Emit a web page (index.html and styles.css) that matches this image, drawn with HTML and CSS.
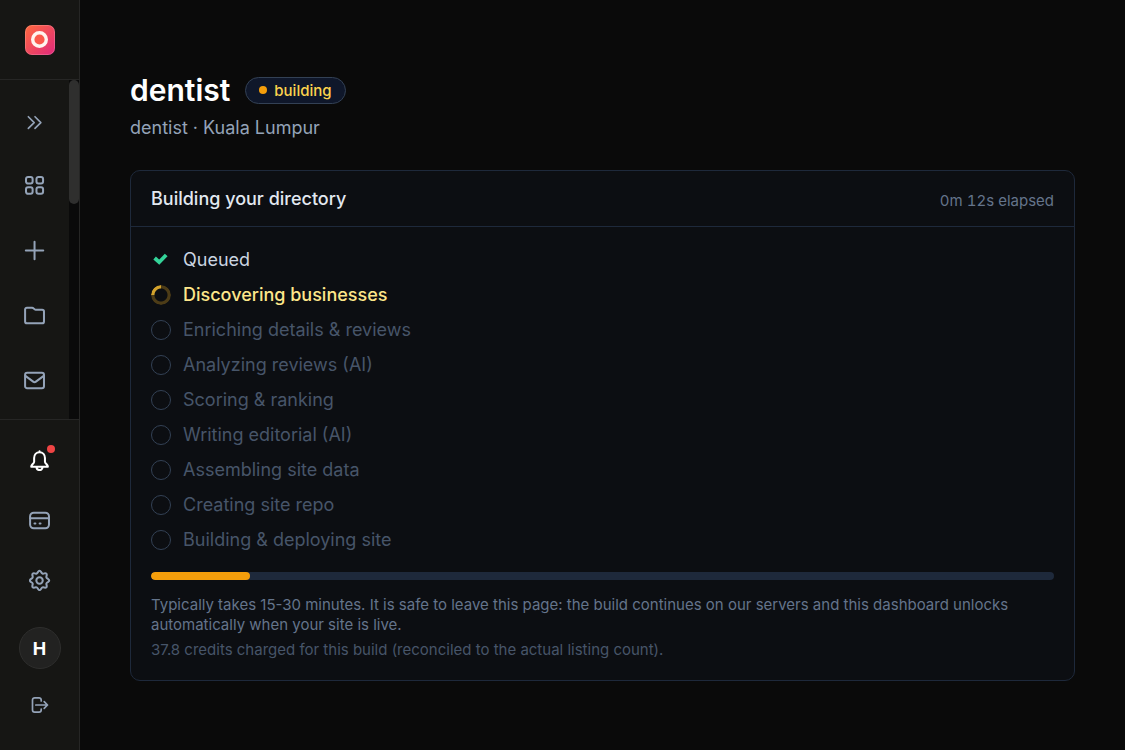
FILE: index.html
```html
<!DOCTYPE html>
<html lang="en">
  <head>
    <meta charset="UTF-8" />
    <meta name="viewport" content="width=device-width, initial-scale=1" />
    <title>dentist · Kuala Lumpur</title>
    <link rel="stylesheet" href="styles.css">
  </head>

  <body>
    <aside class="sidebar">
      <div class="sidebar-top">
        <a class="logo" href="#" aria-label="Home">
          <svg width="30" height="30" viewBox="0 0 30 30">
            <defs>
              <linearGradient id="logo-bg" x1="0" y1="0" x2="1" y2="1">
                <stop offset="0" stop-color="#ff6a3d" />
                <stop offset="1" stop-color="#e0287d" />
              </linearGradient>
            </defs>
            <rect width="30" height="30" rx="7" fill="url(#logo-bg)" />
            <rect x="0.5" y="0.5" width="29" height="29" rx="6.5" fill="none" stroke="#fff" stroke-opacity="0.18" />
            <circle cx="14.5" cy="14.5" r="6.8" fill="#fb5a4b" stroke="#fff4ee" stroke-width="3.4" />
          </svg>
        </a>
      </div>

      <div class="nav-scroll">
        <nav class="nav">
          <button class="nav-item nav-toggle" type="button" aria-label="Expand sidebar">
            <svg class="icon" viewBox="0 0 24 24"><path d="M4 4.5l7 7-7 7M12 4.5l7 7-7 7" /></svg>
          </button>
          <a class="nav-item" href="#" aria-label="Dashboard">
            <svg class="icon" viewBox="0 0 24 24">
              <rect x="2.2" y="3.2" width="7.2" height="7.2" rx="2.2" />
              <rect x="13.6" y="3.2" width="7.2" height="7.2" rx="2.2" />
              <rect x="2.2" y="14.4" width="7.2" height="7.2" rx="2.2" />
              <rect x="13.6" y="14.4" width="7.2" height="7.2" rx="2.2" />
            </svg>
          </a>
          <a class="nav-item" href="#" aria-label="New directory">
            <svg class="icon" viewBox="0 0 24 24"><path d="M11.5 3v19M2 12.5h19" /></svg>
          </a>
          <a class="nav-item" href="#" aria-label="Directories">
            <svg class="icon" viewBox="0 0 24 24"><path d="M1.2 6a2 2 0 0 1 2-2h5.6c1.8 0 2 2.2 3.8 2.2h7.2a2 2 0 0 1 2 2V19a2 2 0 0 1-2 2H3.2a2 2 0 0 1-2-2z" /></svg>
          </a>
          <a class="nav-item" href="#" aria-label="Messages">
            <svg class="icon" viewBox="0 0 24 24"><rect x="1.2" y="4" width="20.6" height="17" rx="2.2" /><path d="M1.5 7.5l8.5 6.3a2.5 2.5 0 0 0 3 0l8.5-6.3" /></svg>
          </a>
        </nav>
        <div class="scroll-track"><div class="scroll-thumb"></div></div>
      </div>

      <div class="sidebar-bottom">
        <button class="tool bell" type="button" aria-label="Notifications">
          <svg class="icon" viewBox="0 0 24 24"><path d="M11.5 2.5v1M11.5 3.5c-3.6 0-5.9 2.7-5.9 6.2v4.1c0 2-3.2 3.3-3.2 5.5h18.2c0-2.2-3.2-3.5-3.2-5.5V9.7c0-3.500-2.300-6.200-5.900-6.200zM8.200 19.700a3.300 3.300 0 0 0 6.600 0" /></svg>
          <span class="bell-dot"></span>
        </button>
        <a class="tool" href="#" aria-label="Billing">
          <svg class="icon" viewBox="0 0 24 24"><rect x="1.2" y="4" width="20.6" height="17" rx="4" /><path d="M1.2 10h20.6M6 15.8h1M11.6 15.8h1" /></svg>
        </a>
        <a class="tool" href="#" aria-label="Settings">
          <svg class="icon" viewBox="-11.500 -12.500 24 24">
            <circle r="3.5" />
            <path d="M9.12-1.81Q12 0 9.12 1.81Q6.740 2.790 7.730 5.170Q8.490 8.490 5.170 7.730Q2.790 6.740 1.810 9.120Q0 12-1.810 9.120Q-2.790 6.740-5.170 7.730Q-8.490 8.490-7.730 5.170Q-6.740 2.790-9.120 1.810Q-12 0-9.120-1.810Q-6.740-2.790-7.730-5.170Q-8.490-8.490-5.170-7.730Q-2.790-6.740-1.810-9.120Q0-12 1.810-9.120Q2.790-6.740 5.170-7.730Q8.490-8.490 7.730-5.170Q6.740-2.790 9.120-1.810z" />
          </svg>
        </a>
        <button class="avatar" type="button" aria-label="Account">H</button>
        <button class="logout" type="button" aria-label="Log out">
          <svg class="icon" viewBox="0 0 18 18"><path d="M10.2 5V4a2.2 2.2 0 0 0-2.2-2.2H3.7A2.2 2.2 0 0 0 1.5 4v10a2.2 2.2 0 0 0 2.2 2.2H8a2.2 2.2 0 0 0 2.2-2.2v-1M4.8 9h11.7M13.2 5.7L16.5 9l-3.3 3.3" /></svg>
        </button>
      </div>
    </aside>

    <main class="main">
      <header class="page-header">
        <div class="title-row">
          <h1>dentist</h1>
          <span class="badge"><span class="badge-dot"></span>building</span>
        </div>
        <p class="subtitle">dentist · Kuala Lumpur</p>
      </header>

      <section class="card">
        <div class="card-header">
          <h2>Building your directory</h2>
          <span class="elapsed">0m 12s elapsed</span>
        </div>
        <div class="card-body">
          <ol class="steps">
            <li class="step done">
              <svg class="check" width="20" height="20" viewBox="0 0 20 20"><path d="M3.6 8l4.600 4.200 7-7.200" /></svg>
              Queued
            </li>
            <li class="step active"><span class="spinner"></span>Discovering businesses</li>
            <li class="step"><span class="ring"></span>Enriching details &amp; reviews</li>
            <li class="step"><span class="ring"></span>Analyzing reviews (AI)</li>
            <li class="step"><span class="ring"></span>Scoring &amp; ranking</li>
            <li class="step"><span class="ring"></span>Writing editorial (AI)</li>
            <li class="step"><span class="ring"></span>Assembling site data</li>
            <li class="step"><span class="ring"></span>Creating site repo</li>
            <li class="step"><span class="ring"></span>Building &amp; deploying site</li>
          </ol>
          <div class="progress" role="progressbar" aria-label="Build progress" aria-valuenow="11" aria-valuemin="0" aria-valuemax="100">
            <div class="progress-fill" style="width: 11%"></div>
          </div>
          <p class="note">Typically takes 15-30 minutes. It is safe to leave this page: the build continues on our servers and this dashboard unlocks automatically when your site is live.</p>
          <p class="credits">37.8 credits charged for this build (reconciled to the actual listing count).</p>
        </div>
      </section>
    </main>
  </body>
</html>
```
FILE: styles.css
```css
* {
  box-sizing: border-box;
  margin: 0;
  padding: 0;
}

body {
  display: flex;
  min-height: 100vh;
  background: #0a0a0a;
  color: #fff;
  font-family: Inter, "Liberation Sans", sans-serif;
  font-size: 18px;
  line-height: 25px;
}

button {
  background: none;
  border: 0;
  color: inherit;
  font: inherit;
  cursor: pointer;
}

a {
  color: inherit;
}

/* sidebar */
.sidebar {
  position: sticky;
  top: 0;
  display: flex;
  flex-direction: column;
  flex: none;
  width: 80px;
  height: 100vh;
  background: #161614;
  border-right: 1px solid #262625;
  color: #94a3b8;
}

.sidebar-top {
  display: flex;
  flex: none;
  align-items: center;
  justify-content: center;
  height: 80px;
  border-bottom: 1px solid #262625;
}

.logo {
  display: flex;
}

.nav-scroll {
  display: flex;
  flex: 1;
  min-height: 0;
  overflow: hidden;
}

.nav {
  display: flex;
  flex: 1;
  flex-direction: column;
  align-items: center;
  gap: 15px;
  padding-top: 20px;
}

.nav-item,
.tool {
  display: flex;
  flex: none;
  align-items: center;
  justify-content: center;
  width: 50px;
  height: 50px;
}

.nav-toggle {
  height: 45px;
}

.icon {
  width: 22px;
  height: 22px;
  fill: none;
  stroke: currentColor;
  stroke-width: 2.2;
  stroke-linecap: round;
  stroke-linejoin: round;
}

.nav-toggle .icon {
  width: 20px;
  height: 20px;
  stroke-width: 2;
}

.scroll-track {
  width: 10px;
  background: #0a0a0a;
}

.scroll-thumb {
  height: 124px;
  border-radius: 5px;
  background: #2f2f2e;
}

.sidebar-bottom {
  display: flex;
  flex: none;
  flex-direction: column;
  align-items: center;
  gap: 10px;
  padding: 15px 0 30px;
  border-top: 1px solid #262625;
}

.bell {
  position: relative;
  color: #fff;
}

.bell-dot {
  position: absolute;
  top: 10px;
  right: 10px;
  width: 8px;
  height: 8px;
  border-radius: 50%;
  background: #ef4444;
}

.avatar {
  width: 42px;
  height: 42px;
  margin-top: 12px;
  border: 1px solid #2e2e2d;
  border-radius: 50%;
  background: #222221;
  color: #fff;
  font-weight: 700;
}

.logout {
  display: flex;
  align-items: center;
  justify-content: center;
  width: 30px;
  height: 30px;
  margin-top: 11px;
}

.logout .icon {
  width: 18px;
  height: 18px;
  stroke-width: 1.7;
}

/* page */
.main {
  flex: 1;
  min-width: 0;
  padding: 70px 50px;
}

.page-header {
  margin-bottom: 30px;
}

.title-row {
  display: flex;
  align-items: center;
  gap: 15px;
}

h1 {
  font-size: 30px;
  font-weight: 600;
  line-height: 40px;
}

.badge {
  display: flex;
  align-items: center;
  gap: 7px;
  height: 27px;
  padding: 0 13px;
  border: 1px solid #334155;
  border-radius: 14px;
  background: #0f172a;
  color: #fcd34d;
  font-size: 15px;
  font-weight: 500;
}

.badge-dot {
  width: 8px;
  height: 8px;
  border-radius: 50%;
  background: #f59e0b;
}

.subtitle {
  margin-top: 5px;
  color: #94a3b8;
}

.card {
  border: 1px solid #1e293b;
  border-radius: 10px;
  background: #0c0e12;
}

.card-header {
  display: flex;
  align-items: flex-end;
  justify-content: space-between;
  padding: 15px 20px;
  border-bottom: 1px solid #1e293b;
}

h2 {
  color: #e2e8f0;
  font-size: 18px;
  font-weight: 500;
}

.elapsed {
  color: #64748b;
  font-size: 15px;
  line-height: 20px;
  font-variant-numeric: tabular-nums;
}

.card-body {
  padding: 20px;
}

.steps {
  display: flex;
  flex-direction: column;
  gap: 10px;
  list-style: none;
}

.step {
  display: flex;
  align-items: center;
  gap: 12px;
  color: #475569;
}

.step.done {
  color: #cbd5e1;
}

.step.active {
  color: #fde68a;
  font-weight: 500;
}

.check {
  fill: none;
  stroke: #34d399;
  stroke-width: 3.8;
}

.spinner,
.ring {
  width: 20px;
  height: 20px;
  border: 1px solid #334155;
  border-radius: 50%;
}

.spinner {
  border: 0;
  background: conic-gradient(#4d3c17 75%, #d3a22c 75%);
  -webkit-mask: radial-gradient(circle, transparent 6px, #000 7px);
  mask: radial-gradient(circle, transparent 6px, #000 7px);
}

.progress {
  height: 8px;
  margin-top: 20px;
  border-radius: 4px;
  background: #1e293b;
  overflow: hidden;
}

.progress-fill {
  height: 100%;
  border-radius: 4px;
  background: #f59e0b;
}

.note,
.credits {
  font-size: 15px;
  line-height: 20px;
}

.note {
  margin-top: 15px;
  color: #64748b;
}

.credits {
  margin-top: 5px;
  color: #475569;
}
```
